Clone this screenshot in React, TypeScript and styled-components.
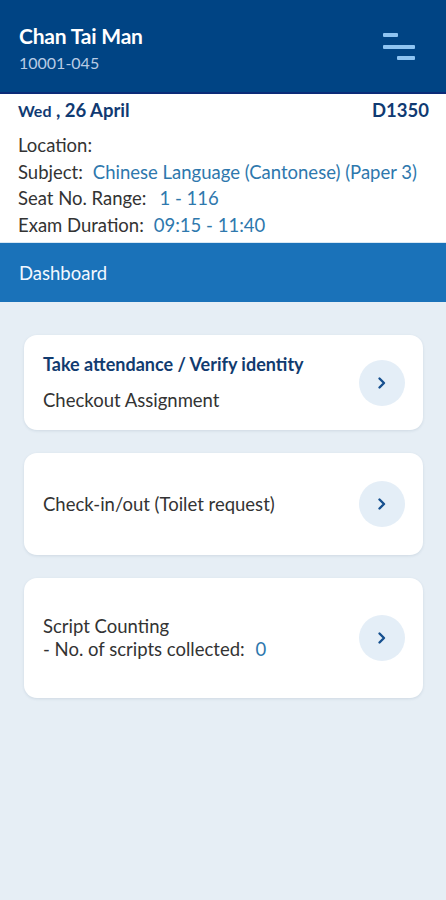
import * as React from "react";
import styled, { createGlobalStyle } from "styled-components";

const GlobalStyle = createGlobalStyle`
  html, body {
    margin: 0;
    padding: 0;
    background: #e6eef5;
    font-family: Lato, "Open Sans", sans-serif;
  }
`;

const Page = styled.div`
  width: 446px;
  min-height: 900px;
  background: #e6eef5;
  display: flex;
  flex-direction: column;
`;

const Header = styled.header`
  height: 94px;
  background: #004484;
  border-bottom: 2px solid #0b2b78;
  display: flex;
  align-items: flex-start;
  justify-content: space-between;
  padding: 23px 31px 0 19px;
  box-sizing: border-box;
`;

const UserBlock = styled.div`
  display: flex;
  flex-direction: column;
  gap: 4px;
`;

const UserName = styled.div`
  color: #ffffff;
  font-size: 21px;
  line-height: 26px;
  font-weight: 700;
  letter-spacing: -0.2px;
`;

const UserId = styled.div`
  color: #b9cce4;
  font-size: 16px;
  line-height: 20px;
`;

const MenuButton = styled.div`
  width: 32px;
  display: flex;
  flex-direction: column;
  gap: 7.5px;
  margin-top: 10px;
`;

const MenuLine = styled.span<{ $w: number; $align: "start" | "end" }>`
  display: block;
  height: 4px;
  border-radius: 1px;
  width: ${(p) => p.$w}px;
  align-self: ${(p) => (p.$align === "start" ? "flex-start" : "flex-end")};
  background: #8ec4f2;
`;

const Info = styled.section`
  background: #ffffff;
  padding: 5px 8px 0 18px;
  height: 149px;
  box-sizing: border-box;
  overflow: hidden;
  border-bottom: 1px solid #d8e8f4;
`;

const DateRow = styled.div`
  display: flex;
  justify-content: space-between;
  align-items: baseline;
  color: #103a72;
  font-weight: 700;
  padding-right: 9px;
  margin-bottom: 11px;
`;

const DateText = styled.div`
  font-size: 18.5px;
`;

const Day = styled.span`
  font-size: 16px;
`;

const Code = styled.div`
  font-size: 18.5px;
`;

const InfoLine = styled.div`
  display: flex;
  gap: 10px;
  font-size: 18.5px;
  line-height: 26.7px;
  color: #333333;
  white-space: nowrap;
`;

const InfoValue = styled.span<{ $indent?: number }>`
  color: #2e78ad;
  margin-left: ${(p) => p.$indent ?? 0}px;
`;

const SectionBar = styled.div`
  height: 59px;
  background: #1a72b9;
  display: flex;
  align-items: center;
  padding: 0 19px;
  color: #f2f8ff;
  font-size: 18.5px;
`;

const CardList = styled.div`
  display: flex;
  flex-direction: column;
  gap: 23px;
  padding: 33px 23px 0 24px;
`;

const Card = styled.div<{ $h: number }>`
  height: ${(p) => p.$h}px;
  background: #ffffff;
  border-radius: 13px;
  box-shadow: 0 1px 3px rgba(40, 70, 110, 0.12);
  display: flex;
  align-items: center;
  justify-content: space-between;
  padding: 0 18px 0 19px;
  box-sizing: border-box;
`;

const CardText = styled.div<{ $gap: number }>`
  display: flex;
  flex-direction: column;
  gap: ${(p) => p.$gap}px;
  font-size: 18.5px;
  line-height: 23px;
  color: #333333;
`;

const CardTitle = styled.div`
  color: #113b6f;
  font-weight: 700;
  font-size: 18px;
`;

const CountValue = styled.span`
  color: #2e78ad;
  margin-left: 6px;
`;

const Chevron = styled.div`
  width: 46px;
  height: 46px;
  border-radius: 50%;
  background: #e4eef7;
  display: flex;
  align-items: center;
  justify-content: center;
`;

const ChevronIcon = () => (
  <svg width="12" height="14" viewBox="0 0 12 14">
    <path d="M3.5 2.5 L8 7 L3.5 11.5" fill="none" stroke="#16508f" strokeWidth="2.4" strokeLinecap="round" strokeLinejoin="round" />
  </svg>
);

export default function App() {
  return (
    <Page>
      <GlobalStyle />
      <Header>
        <UserBlock>
          <UserName>Chan Tai Man</UserName>
          <UserId>10001-045</UserId>
        </UserBlock>
        <MenuButton>
          <MenuLine $w={15} $align="start" />
          <MenuLine $w={32} $align="start" />
          <MenuLine $w={18} $align="end" />
        </MenuButton>
      </Header>
      <Info>
        <DateRow>
          <DateText>
            <Day>Wed</Day> , 26 April
          </DateText>
          <Code>D1350</Code>
        </DateRow>
        <InfoLine>Location:</InfoLine>
        <InfoLine>
          Subject: <InfoValue>Chinese Language (Cantonese) (Paper 3)</InfoValue>
        </InfoLine>
        <InfoLine>
          Seat No. Range: <InfoValue $indent={3}>1 - 116</InfoValue>
        </InfoLine>
        <InfoLine>
          Exam Duration: <InfoValue>09:15 - 11:40</InfoValue>
        </InfoLine>
      </Info>
      <SectionBar>Dashboard</SectionBar>
      <CardList>
        <Card $h={95}>
          <CardText $gap={13}>
            <CardTitle>Take attendance / Verify identity</CardTitle>
            <div>Checkout Assignment</div>
          </CardText>
          <Chevron>
            <ChevronIcon />
          </Chevron>
        </Card>
        <Card $h={102}>
          <CardText $gap={0}>
            <div>Check-in/out (Toilet request)</div>
          </CardText>
          <Chevron>
            <ChevronIcon />
          </Chevron>
        </Card>
        <Card $h={120}>
          <CardText $gap={0}>
            <div>Script Counting</div>
            <div>
              - No. of scripts collected: <CountValue>0</CountValue>
            </div>
          </CardText>
          <Chevron>
            <ChevronIcon />
          </Chevron>
        </Card>
      </CardList>
    </Page>
  );
}
